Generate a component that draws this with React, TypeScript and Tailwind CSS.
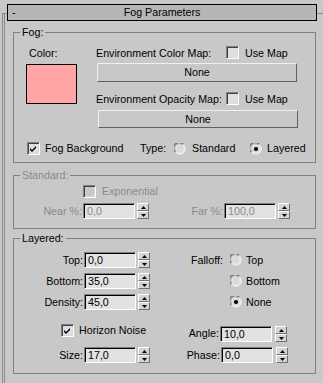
import React from "react";

const Check = ({ checked = false, disabled = false }: { checked?: boolean; disabled?: boolean }) => (
  <div
    className={`w-[13px] h-[13px] shrink-0 border border-t-[#808080] border-l-[#808080] border-r-white border-b-white shadow-[inset_1px_1px_0_#404040,inset_-1px_-1px_0_#d8d8d8] flex items-center justify-center ${
      disabled ? "bg-[#c8c8c8]" : "bg-[#e0e0e0]"
    }`}
  >
    {checked && (
      <svg width="9" height="9" viewBox="0 0 9 9">
        <path d="M1 4 L3 6 L7 2 L7 3 L3 7 L1 5 Z M1 5 L3 7 L7 3 L7 4 L3 8 L1 6 Z" fill="#000" />
      </svg>
    )}
  </div>
);

const Radio = ({ on = false }: { on?: boolean }) => (
  <svg width="12" height="12" viewBox="0 0 12 12" className="shrink-0">
    <circle cx="6" cy="6" r="5.8" fill="#ececec" />
    <path d="M1.1 9.2 A5.4 5.4 0 0 1 9.2 1.1" stroke="#6e6e6e" strokeWidth="1.2" fill="none" />
    <path d="M2.1 8.6 A4.4 4.4 0 0 1 8.6 2.1" stroke="#9a9a9a" strokeWidth="1" fill="none" />
    <circle cx="6" cy="6" r="3.7" fill="#dadada" />
    {on && <circle cx="6" cy="6" r="2.1" fill="#000" />}
  </svg>
);

const Field = ({ value, disabled = false }: { value: string; disabled?: boolean }) => (
  <div
    className={`w-[52px] h-[16px] shrink-0 bg-[#e2e2e2] border border-t-[#808080] border-l-[#808080] border-r-white border-b-white shadow-[inset_1px_1px_0_#000] pl-[3px] pt-[1px] leading-[13px] ${
      disabled ? "text-[#8a8a8a]" : "text-black"
    }`}
  >
    {value}
  </div>
);

const SpinHalf = ({ up }: { up: boolean }) => (
  <div className="w-[12px] h-[8px] bg-[#d4d4d4] border border-t-white border-l-white border-r-[#707070] border-b-[#707070] flex items-center justify-center">
    <svg width="5" height="3" viewBox="0 0 5 3">
      {up ? <path d="M0 3 L5 3 L2.5 0 Z" fill="#000" /> : <path d="M0 0 L5 0 L2.5 3 Z" fill="#000" />}
    </svg>
  </div>
);

const Spin = () => (
  <div className="flex flex-col shrink-0">
    <SpinHalf up />
    <SpinHalf up={false} />
  </div>
);

const Legend = ({ text, disabled = false }: { text: string; disabled?: boolean }) => (
  <div
    className={`-mt-[7px] ml-[6px] px-[2px] h-[13px] w-fit bg-[#c8c8c8] ${disabled ? "text-[#8a8a8a]" : "text-black"}`}
  >
    {text}
  </div>
);

const NoneBtn = ({ extra }: { extra: string }) => (
  <div
    className={`w-[200px] bg-[#c8c8c8] border border-t-[#f0f0f0] border-l-[#f0f0f0] border-r-[#606060] border-b-[#606060] flex items-center justify-center ${extra}`}
  >
    None
  </div>
);

export default function App() {
  return (
    <div className="w-[323px] h-[383px] bg-[#c8c8c8] overflow-hidden pt-[13px] font-['Liberation_Sans',Arial,sans-serif] text-[10.7px] leading-[13px] text-black">
      <div className="ml-[2px] w-[321px] h-[400px] border-t border-t-[#8a8a8a] border-l-[3px] border-l-[#8a8a8a] [border-left-style:double]">
        {/* header */}
        <div className="-mt-[10px] ml-[2px] w-[310px] h-[17px] bg-[#b6b6b6] border border-black grid grid-cols-[20px_1fr_20px] items-center">
          <div className="pl-[4px]">-</div>
          <div className="text-center">Fog Parameters</div>
          <div />
        </div>

        {/* Fog group */}
        <div className="mt-[11px] ml-[8px] w-[303px] h-[131px] border border-[#808080]">
          <Legend text="Fog:" />
          <div className="flex">
            <div className="ml-[12px] w-[52px]">
              <div className="mt-[8px] ml-[3px] h-[13px]">Color:</div>
              <div className="mt-[4px] w-[51px] h-[40px] bg-[#ffa5a5] border border-black" />
            </div>
            <div className="ml-[18px]">
              <div className="mt-[8px] h-[13px] flex items-center">
                <div className="w-[130px]">Environment Color Map:</div>
                <div className="-mt-[2px]">
                  <Check />
                </div>
                <div className="ml-[6px]">Use Map</div>
              </div>
              <NoneBtn extra="mt-[3px] ml-[1px] h-[19px]" />
              <div className="mt-[11px] h-[13px] flex items-center">
                <div className="w-[130px]">Environment Opacity Map:</div>
                <div className="-mt-[2px]">
                  <Check />
                </div>
                <div className="ml-[6px]">Use Map</div>
              </div>
              <NoneBtn extra="mt-[4px] ml-[2px] h-[18px]" />
            </div>
          </div>
          <div className="mt-[14px] ml-[13px] h-[13px] flex items-center">
            <Check checked />
            <div className="ml-[5px] w-[95px]">Fog Background</div>
            <div className="w-[34px]">Type:</div>
            <Radio />
            <div className="ml-[6px] w-[58px]">Standard</div>
            <Radio on />
            <div className="ml-[5px]">Layered</div>
          </div>
        </div>

        {/* Standard group */}
        <div className="mt-[12px] ml-[8px] w-[303px] h-[54px] border border-[#808080]">
          <Legend text="Standard:" disabled />
          <div className="mt-[3px] ml-[69px] h-[13px] flex items-center">
            <Check disabled />
            <div className="ml-[6px] text-[#8a8a8a]">Exponential</div>
          </div>
          <div className="mt-[5px] flex items-center text-[#8a8a8a]">
            <div className="w-[69px] text-right pr-[1px]">Near %:</div>
            <Field value="0,0" disabled />
            <div className="ml-[2px]">
              <Spin />
            </div>
            <div className="w-[75px] text-right pr-[1px]">Far %:</div>
            <Field value="100,0" disabled />
            <div className="ml-[2px]">
              <Spin />
            </div>
          </div>
        </div>

        {/* Layered group */}
        <div className="mt-[9px] ml-[8px] w-[303px] h-[136px] border border-[#808080]">
          <Legend text="Layered:" />
          <div className="mt-[7px] flex items-center h-[16px]">
            <div className="w-[70px] text-right pr-[1px]">Top:</div>
            <Field value="0,0" />
            <div className="ml-[2px]">
              <Spin />
            </div>
            <div className="ml-[41px] w-[39px]">Falloff:</div>
            <Radio />
            <div className="ml-[4px]">Top</div>
          </div>
          <div className="mt-[5px] flex items-center h-[16px]">
            <div className="w-[70px] text-right pr-[1px]">Bottom:</div>
            <Field value="35,0" />
            <div className="ml-[2px]">
              <Spin />
            </div>
            <div className="ml-[41px] w-[39px]" />
            <Radio />
            <div className="ml-[4px]">Bottom</div>
          </div>
          <div className="mt-[5px] flex items-center h-[16px]">
            <div className="w-[70px] text-right pr-[1px]">Density:</div>
            <Field value="45,0" />
            <div className="ml-[2px]">
              <Spin />
            </div>
            <div className="ml-[41px] w-[39px]" />
            <Radio on />
            <div className="ml-[4px]">None</div>
          </div>
          <div className="mt-[16px] flex items-start h-[16px]">
            <div className="w-[156px] flex items-center -mt-[2px]">
              <div className="ml-[47px]">
                <Check checked />
              </div>
              <div className="ml-[5px]">Horizon Noise</div>
            </div>
            <div className="w-[50px] text-right pr-[1px] pt-[1px]">Angle:</div>
            <Field value="10,0" />
            <div className="ml-[3px]">
              <Spin />
            </div>
          </div>
          <div className="mt-[5px] flex items-center h-[16px]">
            <div className="w-[70px] text-right pr-[1px]">Size:</div>
            <Field value="17,0" />
            <div className="ml-[2px]">
              <Spin />
            </div>
            <div className="w-[71px] text-right pr-[1px]">Phase:</div>
            <Field value="0,0" />
            <div className="ml-[3px]">
              <Spin />
            </div>
          </div>
        </div>
      </div>
    </div>
  );
}
